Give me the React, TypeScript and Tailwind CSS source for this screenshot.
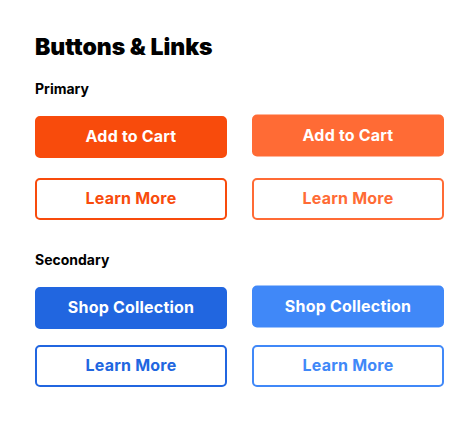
import type { ReactNode } from 'react'

const FONT = "font-['Inter','Noto_Sans',sans-serif]"

type Tone = 'orange' | 'orangeHover' | 'blue' | 'blueHover'

const SOLID: Record<Tone, string> = {
  orange: 'bg-[#f84b0c] border-[#f84b0c]',
  orangeHover: 'bg-[#ff6b35] border-[#ff6b35] -translate-y-[1.5px]',
  blue: 'bg-[#2166e0] border-[#2166e0]',
  blueHover: 'bg-[#4088f8] border-[#4088f8] -translate-y-[1.5px]',
}

const OUTLINE: Record<Tone, string> = {
  orange: 'border-[#f84b0c] text-[#f84b0c]',
  orangeHover: 'border-[#ff6b35] text-[#ff6b35]',
  blue: 'border-[#2166e0] text-[#2166e0]',
  blueHover: 'border-[#4088f8] text-[#4088f8]',
}

function Button({ tone, outline, children }: { tone: Tone; outline?: boolean; children: ReactNode }) {
  const cls = outline ? `bg-white ${OUTLINE[tone]}` : `text-white ${SOLID[tone]}`
  return (
    <button
      type="button"
      className={`flex h-[42px] w-full items-center justify-center rounded-[5px] border-2 pb-[2px] text-[16px] font-bold leading-none tracking-[0.2px] ${cls}`}
    >
      {children}
    </button>
  )
}

export default function App() {
  return (
    <div className={`min-h-[443px] w-[475px] bg-white pl-[35px] pr-[31px] pt-[33px] text-black ${FONT}`}>
      <h2 className="text-[23px] font-black leading-[29px]">Buttons &amp; Links</h2>

      <h3 className="mt-[18px] text-[14px] font-bold leading-[18px]">Primary</h3>
      <div className="mt-[18px] grid grid-cols-2 gap-x-[25px] gap-y-[20px]">
        <Button tone="orange">Add to Cart</Button>
        <Button tone="orangeHover">Add to Cart</Button>
        <Button tone="orange" outline>
          Learn More
        </Button>
        <Button tone="orangeHover" outline>
          Learn More
        </Button>
      </div>

      <h3 className="mt-[31px] text-[14px] font-bold leading-[18px]">Secondary</h3>
      <div className="mt-[18px] grid grid-cols-2 gap-x-[25px] gap-y-[16px]">
        <Button tone="blue">Shop Collection</Button>
        <Button tone="blueHover">Shop Collection</Button>
        <Button tone="blue" outline>
          Learn More
        </Button>
        <Button tone="blueHover" outline>
          Learn More
        </Button>
      </div>
    </div>
  )
}
